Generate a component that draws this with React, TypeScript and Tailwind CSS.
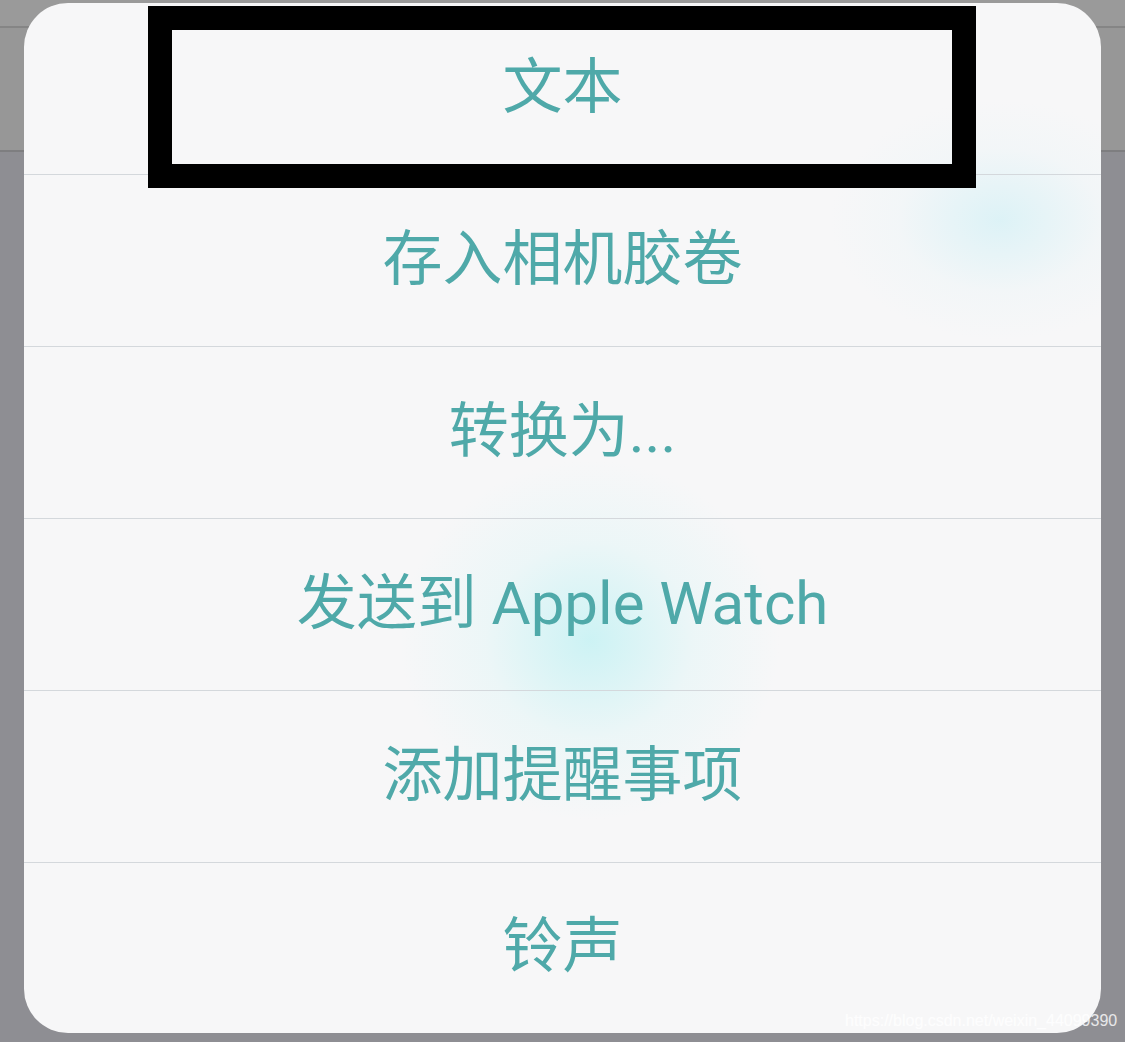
import React from 'react';

const items = ['文本', '存入相机胶卷', '转换为...', '发送到 Apple Watch', '添加提醒事项', '铃声'];

export default function App() {
  return (
    <div className="relative h-[1042px] w-[1125px] overflow-hidden bg-[#8e8e93]">
      {/* page behind the sheet */}
      <div className="h-[28px] border-b-2 border-[#858585] bg-[#9a9a9a]" />
      <div className="h-[124px] border-b-2 border-[#7e7e80] bg-[#979797]" />

      {/* action sheet */}
      <div className="absolute left-[24px] top-[3px] h-[1030px] w-[1077px] overflow-hidden rounded-[44px] bg-[#f7f7f8]">
        <div className="absolute left-[376px] top-[457px] h-[360px] w-[380px] rounded-full bg-[radial-gradient(closest-side,rgba(200,242,244,0.9),rgba(220,245,246,0.4)_55%,rgba(247,247,248,0))]" />
        <div className="absolute left-[806px] top-[97px] h-[240px] w-[340px] rounded-full bg-[radial-gradient(closest-side,rgba(214,241,246,0.8),rgba(232,244,247,0.3)_60%,rgba(247,247,248,0))]" />

        <div className="relative flex h-full flex-col">
          {items.map((label, i) => (
            <div
              key={label}
              className={`flex items-center justify-center text-[60px] leading-none text-[#4fa9a9] font-['Roboto','Noto_Sans_CJK_SC',sans-serif] ${
                i === items.length - 1 ? 'flex-1' : 'h-[172px] border-b border-[#d4d8dc]'
              } ${i === 0 ? 'h-[171px]' : ''}`}
            >
              <span className="pb-[2px]">{label}</span>
            </div>
          ))}
        </div>
      </div>

      {/* annotation box */}
      <div className="absolute left-[148px] top-[6px] h-[182px] w-[828px] border-[24px] border-black" />

      {/* watermark */}
      <div className="absolute left-[845px] top-[1013px] text-[16px] leading-none text-white/80 font-['Liberation_Sans',sans-serif]">
        https://blog.csdn.net/weixin_44099390
      </div>
    </div>
  );
}
